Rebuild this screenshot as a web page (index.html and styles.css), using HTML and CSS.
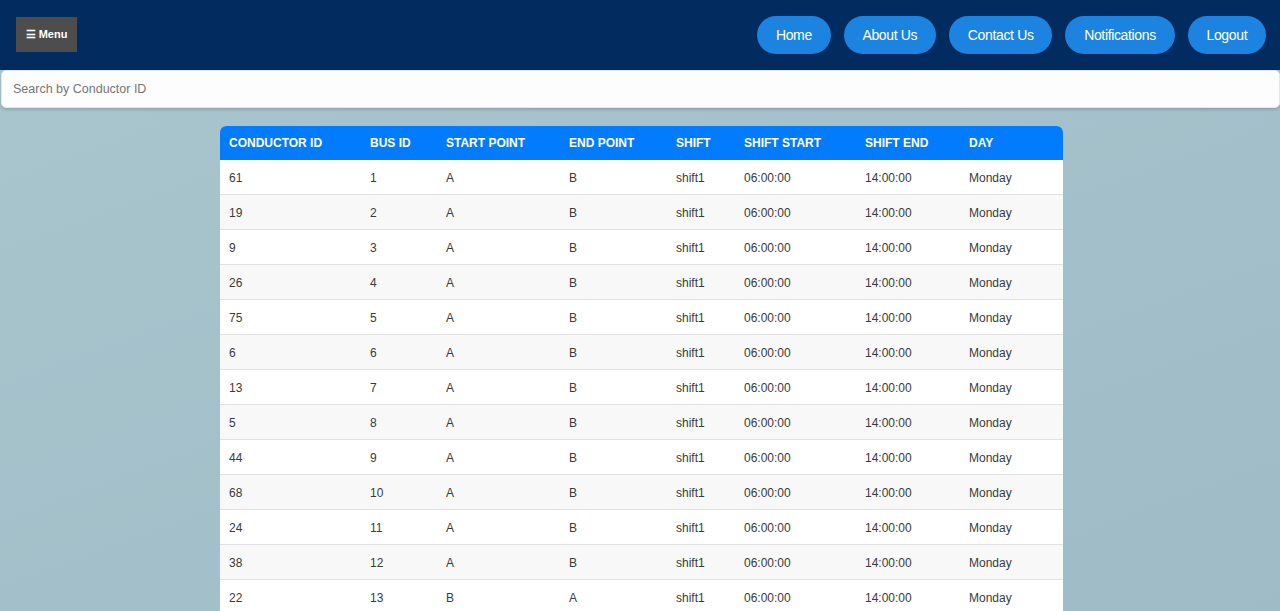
FILE: index.html
```html
<!DOCTYPE html>
<html lang="en">
<head>
<meta charset="utf-8">
<title>Conductor Schedule</title>
<link rel="stylesheet" href="styles.css">
</head>
<body>
<header class="topbar">
  <button class="menu-btn">&#9776; Menu</button>
  <nav class="nav">
    <a class="nav-btn" href="#">Home</a>
    <a class="nav-btn" href="#">About Us</a>
    <a class="nav-btn" href="#">Contact Us</a>
    <a class="nav-btn" href="#">Notifications</a>
    <a class="nav-btn" href="#">Logout</a>
  </nav>
</header>
<div class="search-wrap">
  <input class="search" type="text" placeholder="Search by Conductor ID">
</div>
<main class="content">
  <table class="schedule">
    <colgroup>
      <col class="c1"><col class="c2"><col class="c3"><col class="c4"><col class="c5"><col class="c6"><col class="c7"><col class="c8">
    </colgroup>
    <thead>
      <tr><th>CONDUCTOR ID</th><th>BUS ID</th><th>START POINT</th><th>END POINT</th><th>SHIFT</th><th>SHIFT START</th><th>SHIFT END</th><th>DAY</th></tr>
    </thead>
    <tbody>
      <tr><td>61</td><td>1</td><td>A</td><td>B</td><td>shift1</td><td>06:00:00</td><td>14:00:00</td><td>Monday</td></tr>
      <tr><td>19</td><td>2</td><td>A</td><td>B</td><td>shift1</td><td>06:00:00</td><td>14:00:00</td><td>Monday</td></tr>
      <tr><td>9</td><td>3</td><td>A</td><td>B</td><td>shift1</td><td>06:00:00</td><td>14:00:00</td><td>Monday</td></tr>
      <tr><td>26</td><td>4</td><td>A</td><td>B</td><td>shift1</td><td>06:00:00</td><td>14:00:00</td><td>Monday</td></tr>
      <tr><td>75</td><td>5</td><td>A</td><td>B</td><td>shift1</td><td>06:00:00</td><td>14:00:00</td><td>Monday</td></tr>
      <tr><td>6</td><td>6</td><td>A</td><td>B</td><td>shift1</td><td>06:00:00</td><td>14:00:00</td><td>Monday</td></tr>
      <tr><td>13</td><td>7</td><td>A</td><td>B</td><td>shift1</td><td>06:00:00</td><td>14:00:00</td><td>Monday</td></tr>
      <tr><td>5</td><td>8</td><td>A</td><td>B</td><td>shift1</td><td>06:00:00</td><td>14:00:00</td><td>Monday</td></tr>
      <tr><td>44</td><td>9</td><td>A</td><td>B</td><td>shift1</td><td>06:00:00</td><td>14:00:00</td><td>Monday</td></tr>
      <tr><td>68</td><td>10</td><td>A</td><td>B</td><td>shift1</td><td>06:00:00</td><td>14:00:00</td><td>Monday</td></tr>
      <tr><td>24</td><td>11</td><td>A</td><td>B</td><td>shift1</td><td>06:00:00</td><td>14:00:00</td><td>Monday</td></tr>
      <tr><td>38</td><td>12</td><td>A</td><td>B</td><td>shift1</td><td>06:00:00</td><td>14:00:00</td><td>Monday</td></tr>
      <tr><td>22</td><td>13</td><td>B</td><td>A</td><td>shift1</td><td>06:00:00</td><td>14:00:00</td><td>Monday</td></tr>
    </tbody>
  </table>
</main>
</body>
</html>
```
FILE: styles.css
```css
* { box-sizing: border-box; }
html, body { margin: 0; padding: 0; }
body {
  font-family: "Liberation Sans", Arial, sans-serif;
  background: linear-gradient(160deg, #a9c6ce 0%, #a3bfc9 60%, #9fbbc6 100%);
  min-height: 100vh;
  color: #333;
}
.topbar {
  height: 70px;
  background: #022b5f;
  display: flex;
  align-items: flex-start;
  justify-content: space-between;
  padding: 16px 14px 0 16px;
}
.menu-btn {
  margin-top: 1px;
  width: 61px;
  height: 35px;
  background: #4d4d4d;
  color: #fff;
  border: none;
  font-family: "Liberation Sans", Arial, sans-serif;
  font-size: 11px;
  font-weight: bold;
  padding: 0;
  cursor: pointer;
}
.nav {
  display: flex;
  gap: 13px;
}
.nav-btn {
  display: flex;
  align-items: center;
  height: 38px;
  padding: 0 18.8px;
  border-radius: 19px;
  background: #1c84e0;
  color: #fff;
  font-size: 14px;
  text-decoration: none;
  letter-spacing: -0.35px;
}
.search-wrap {
  padding: 0 0 0 1px;
}
.search {
  display: block;
  width: 100%;
  height: 38px;
  border: 1px solid #e6e6e6;
  border-radius: 5px;
  background: #fdfdfd;
  padding: 0 11px;
  font-family: "Liberation Sans", Arial, sans-serif;
  font-size: 12.5px;
  color: #333;
  box-shadow: 0 2px 3px rgba(0,0,0,0.15);
  outline: none;
}
.search::placeholder { color: #767676; }
.content {
  display: flex;
  justify-content: center;
  padding-top: 18px;
  padding-left: 3px;
}
.schedule {
  width: 843px;
  border-collapse: separate;
  border-spacing: 0;
  background: #fff;
  border-radius: 6px 6px 0 0;
  overflow: hidden;
  font-size: 12px;
  table-layout: fixed;
}
.c1 { width: 141px; }
.c2 { width: 76px; }
.c3 { width: 123px; }
.c4 { width: 107px; }
.c5 { width: 68px; }
.c6 { width: 121px; }
.c7 { width: 104px; }
.c8 { width: 103px; }
.schedule th {
  background: #037bfd;
  color: #fff;
  font-weight: bold;
  text-align: left;
  padding: 10px 9px 10px 9px;
  line-height: 14px;
  white-space: nowrap;
}
.schedule td {
  padding: 11px 9px 9px 9px;
  line-height: 14px;
  border-bottom: 1px solid #e1e1e1;
  color: #3a3a3a;
}
.schedule tbody tr:nth-child(even) td { background: #f8f8f8; }
```
